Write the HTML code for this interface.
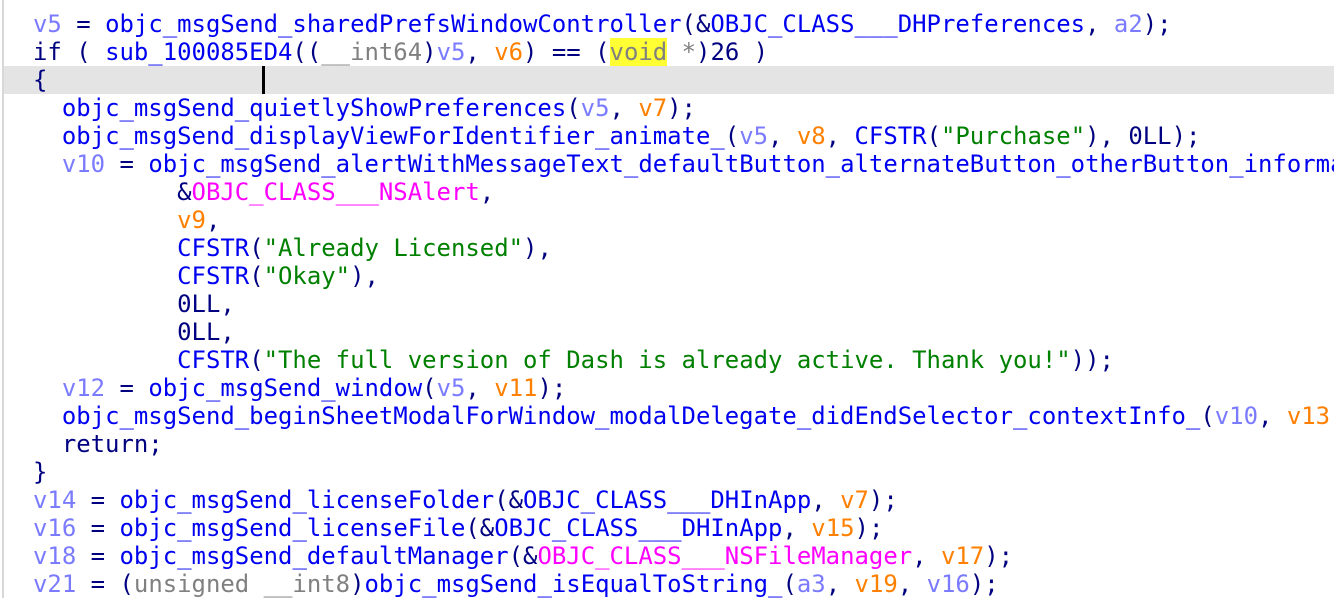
<!DOCTYPE html>
<html><head><meta charset="utf-8"><style>
html,body{margin:0;padding:0;background:#fff;width:1334px;height:598px;overflow:hidden;position:relative}
#bd{position:absolute;left:2px;top:0;width:2px;height:598px;background:#d8d8d8}
#hl{position:absolute;left:4px;top:66px;width:1330px;height:28px;background:#e4e4e4}
#cur{position:absolute;left:262px;top:66px;width:3px;height:28px;background:#000}
pre{position:absolute;left:33px;top:10px;width:1301px;height:588px;overflow:hidden;margin:0;font-family:"DejaVu Sans Mono","Liberation Mono",monospace;font-size:23.95px;line-height:28px;color:#000080;white-space:pre}
.f{color:#0000f0}.v{color:#7b7bff}.o{color:#ff8000}.s{color:#008000}.m{color:#ff00ff}.g{color:#808080}
.y{background:#ffff33;color:#808080}
</style></head><body>
<div id="bd"></div><div id="hl"></div><div id="cur"></div>
<pre><span class="v">v5</span> = <span class="f">objc_msgSend_sharedPrefsWindowController</span>(&amp;<span class="f">OBJC_CLASS___DHPreferences</span>, <span class="v">a2</span>);
if ( <span class="f">sub_100085ED4</span>((<span class="g">__int64</span>)<span class="v">v5</span>, <span class="o">v6</span>) == (<span class="y">void</span> <span class="g">*</span>)26 )
{
  <span class="f">objc_msgSend_quietlyShowPreferences</span>(<span class="v">v5</span>, <span class="o">v7</span>);
  <span class="f">objc_msgSend_displayViewForIdentifier_animate_</span>(<span class="v">v5</span>, <span class="o">v8</span>, <span class="f">CFSTR</span>(<span class="s">"Purchase"</span>), 0LL);
  <span class="v">v10</span> = <span class="f">objc_msgSend_alertWithMessageText_defaultButton_alternateButton_otherButton_informa</span>
          &amp;<span class="m">OBJC_CLASS___NSAlert</span>,
          <span class="o">v9</span>,
          <span class="f">CFSTR</span>(<span class="s">"Already Licensed"</span>),
          <span class="f">CFSTR</span>(<span class="s">"Okay"</span>),
          0LL,
          0LL,
          <span class="f">CFSTR</span>(<span class="s">"The full version of Dash is already active. Thank you!"</span>));
  <span class="v">v12</span> = <span class="f">objc_msgSend_window</span>(<span class="v">v5</span>, <span class="o">v11</span>);
  <span class="f">objc_msgSend_beginSheetModalForWindow_modalDelegate_didEndSelector_contextInfo_</span>(<span class="v">v10</span>, <span class="o">v13</span>
  return;
}
<span class="v">v14</span> = <span class="f">objc_msgSend_licenseFolder</span>(&amp;<span class="f">OBJC_CLASS___DHInApp</span>, <span class="o">v7</span>);
<span class="v">v16</span> = <span class="f">objc_msgSend_licenseFile</span>(&amp;<span class="f">OBJC_CLASS___DHInApp</span>, <span class="o">v15</span>);
<span class="v">v18</span> = <span class="f">objc_msgSend_defaultManager</span>(&amp;<span class="m">OBJC_CLASS___NSFileManager</span>, <span class="o">v17</span>);
<span class="v">v21</span> = (<span class="g">unsigned __int8</span>)<span class="f">objc_msgSend_isEqualToString_</span>(<span class="v">a3</span>, <span class="o">v19</span>, <span class="v">v16</span>);</pre>
</body></html>
